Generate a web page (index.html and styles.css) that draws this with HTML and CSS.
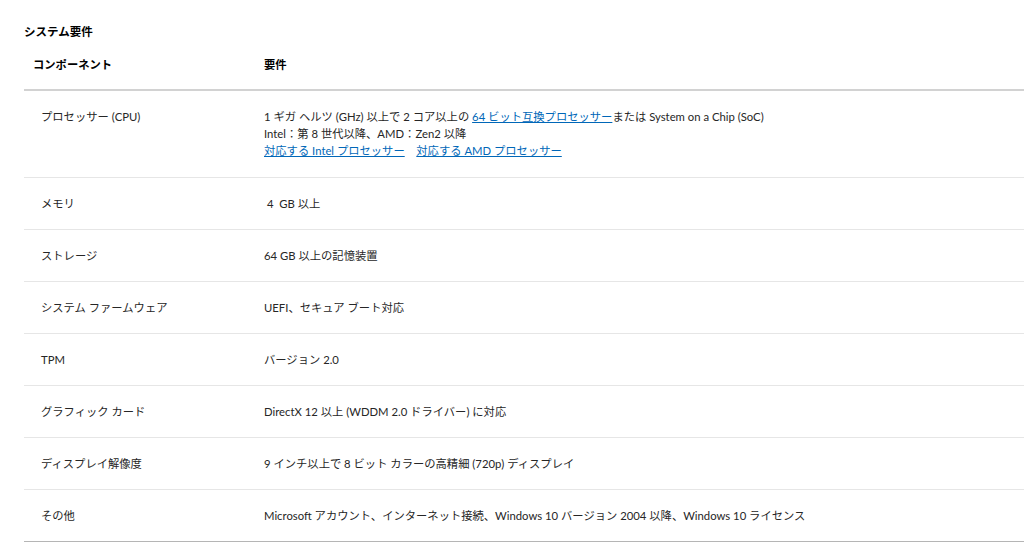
FILE: index.html
```html
<!DOCTYPE html>
<html lang="ja">
<head>
    <meta charset="UTF-8">
    <meta name="viewport" content="width=device-width, initial-scale=1.0">
    <title>システム要件</title>
    <link rel="stylesheet" href="styles.css">
</head>
<body>

<div class="spec">
    <h2 class="spec-title">システム要件</h2>

    <table class="spec-table">
        <thead>
            <tr>
                <th class="col-name">コンポーネント</th>
                <th>要件</th>
            </tr>
        </thead>
        <tbody>
            <tr>
                <td class="col-name">プロセッサー (CPU)</td>
                <td>
                    1 ギガ ヘルツ (GHz) 以上で 2 コア以上の <a href="#">64 ビット互換プロセッサー</a>または System on a Chip (SoC)<br>
                    Intel：第 8 世代以降、AMD：Zen2 以降<br>
                    <a href="#">対応する Intel プロセッサー</a>&nbsp;&nbsp;&nbsp; <a href="#">対応する AMD プロセッサー</a>
                </td>
            </tr>
            <tr>
                <td class="col-name">メモリ</td>
                <td>&nbsp;4&nbsp; GB 以上</td>
            </tr>
            <tr>
                <td class="col-name">ストレージ</td>
                <td>64 GB 以上の記憶装置</td>
            </tr>
            <tr>
                <td class="col-name">システム ファームウェア</td>
                <td>UEFI、セキュア ブート対応</td>
            </tr>
            <tr>
                <td class="col-name">TPM</td>
                <td>バージョン 2.0</td>
            </tr>
            <tr>
                <td class="col-name">グラフィック カード</td>
                <td>DirectX 12 以上 (WDDM 2.0 ドライバー) に対応</td>
            </tr>
            <tr>
                <td class="col-name">ディスプレイ解像度</td>
                <td>9 インチ以上で 8 ビット カラーの高精細 (720p) ディスプレイ</td>
            </tr>
            <tr>
                <td class="col-name">その他</td>
                <td>Microsoft アカウント、インターネット接続、Windows 10 バージョン 2004 以降、Windows 10 ライセンス</td>
            </tr>
        </tbody>
    </table>
</div>

</body>
</html>
```

FILE: styles.css
```css
body {
    margin: 0;
    background-color: #fff;
    color: #262626;
    font-family: Lato, "Noto Sans CJK JP", sans-serif;
    font-size: 11.3px;
}
.spec {
    padding: 23px 0 0 24px;
}
.spec-title {
    margin: 0 0 16px;
    font-size: 11.5px;
    line-height: 17px;
    font-weight: bold;
    color: #000;
}
.spec-table {
    width: 1010px;
    border-collapse: collapse;
}
.spec-table th {
    text-align: left;
    font-weight: bold;
    color: #000;
    padding: 0 0 16px 0;
    line-height: 17px;
    border-bottom: 2px solid #d2d2d2;
}
.spec-table th.col-name {
    padding-left: 9px;
}
.spec-table td {
    vertical-align: top;
    padding: 17px 0;
    line-height: 17px;
    border-bottom: 1px solid #e6e6e6;
}
.spec-table td.col-name {
    padding-left: 17px;
}
.col-name {
    width: 223px;
}
.spec-table tbody tr:first-child td {
    padding-top: 17px;
    padding-bottom: 18px;
}
.spec-table tbody tr:last-child td {
    border-bottom: 1px solid #b5b5b5;
}
a {
    color: #0067b8;
    text-decoration: underline;
}
```
